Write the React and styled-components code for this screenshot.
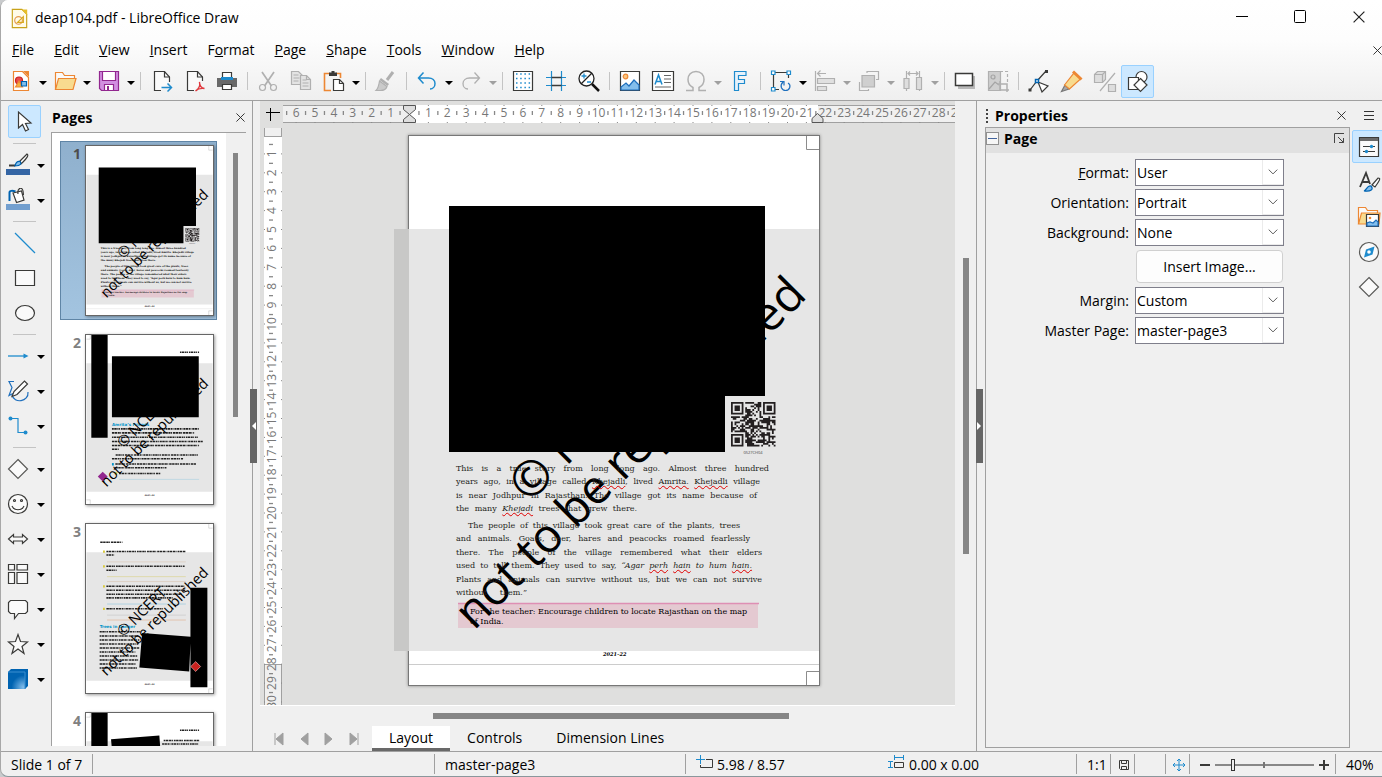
import styled, { createGlobalStyle } from "styled-components";

const DARK = "#3a3a38";
const BLUE = "#1e8bcd";
const GREY = "#b0b0b0";
const LINE = "#a0a0a0";

const GlobalStyle = createGlobalStyle`
  * {
    box-sizing: border-box;
  }
  body {
    margin: 0;
    background: #c9cbcd;
    font-family: "Open Sans", "Noto Sans", sans-serif;
    font-size: 14px;
    line-height: 20px;
    color: #000;
  }
  button, input, select {
    font: inherit;
    color: inherit;
    margin: 0;
  }
`;

/* ---------- window ---------- */

const Window = styled.div`
  height: 100vh;
  display: flex;
  flex-direction: column;
  overflow: hidden;
  background: #f0f0f0;
  border-left: 1px solid #a8a8a8;
  border-bottom: 1px solid #8a979c;
  border-radius: 8px 0 0 8px;
`;

const Top = styled.header`
  background: linear-gradient(#fff, #fdfdfd 40%, #efefef);
  border-bottom: 1px solid ${LINE};
`;

const TitleBar = styled.div`
  display: flex;
  align-items: center;
  height: 36px;
  padding-left: 7px;
`;

const Title = styled.h1`
  flex: 1;
  margin: 0 0 0 4px;
  font-size: 14px;
  font-weight: 400;
`;

const WindowButton = styled.button`
  width: 58px;
  height: 34px;
  padding: 0;
  border: 0;
  background: none;

  &:last-child {
    width: 60px;
    margin-right: -7px;
  }
`;

const MenuBar = styled.nav`
  display: flex;
  align-items: center;
  gap: 20px;
  height: 28px;
  padding-left: 11px;
`;

const MenuItem = styled.button`
  padding: 0;
  border: 0;
  background: none;
`;

const EndButton = styled(MenuItem)`
  margin-left: auto;
  line-height: 0;
`;

const Toolbar = styled.div`
  display: flex;
  align-items: center;
  height: 36px;
  padding: 0 0 2px 3px;
`;

const ToolButton = styled.button`
  flex: none;
  display: grid;
  place-items: center;
  width: 33px;
  height: ${(p) => p.$height || 33}px;
  padding: 0;
  border: 1px solid ${(p) => (p.$active ? "#99d1ff" : "transparent")};
  border-radius: 2px;
  background: ${(p) => (p.$active ? "#cce8ff" : "none")};
`;

const ArrowButton = styled.button`
  display: grid;
  place-items: center;
  width: 11px;
  height: 33px;
  padding: 3px 0 0;
  border: 0;
  background: none;

  &::after {
    content: "";
    border: 4px solid transparent;
    border-top-color: ${(p) => (p.disabled ? "#a0a0a0" : "#000")};
    border-bottom: 0;
  }
`;

const Separator = styled.span`
  width: 1px;
  height: 18px;
  margin: 0 3px 0 4px;
  background: #c4c4c4;
`;

/* ---------- icons ---------- */

const icons = {
  app: (
    <>
      <path d="M4.500 2.500h10l5 5v14h-15z" fill="#fffbe8" stroke="#c8a21a" />
      <path d="M14 2.500h6v6z" fill="#e6be2a" />
      <circle cx="11" cy="14" r="4" stroke="#e39a52" />
      <path d="M10 16l6-6v6z" stroke="#d9a91c" />
    </>
  ),
  newDoc: (
    <>
      <path d="M4.500 2.500h9l6 6v13h-15z" fill="#fff" stroke="#ed8733" />
      <path d="M14 2h6v6z" fill="#ed8733" />
      <circle cx="10" cy="11.500" r="3.500" fill="#e8484a" stroke="#c9211e" />
      <path d="M6.500 18l3.500-6 3.500 6z" fill="#f4b13e" stroke="#ed8733" />
      <path d="M12.500 12.500h5v4.500h-5z" fill="#83beec" stroke="#0063b1" />
    </>
  ),
  open: (
    <>
      <path d="M2.500 20.500V3.500h7l2 3h10v3" stroke="#ed8733" fill="#fafafa" />
      <path d="M2.500 20.500l3-11H23l-3 11z" fill="#f8db8f" stroke="#ed8733" />
    </>
  ),
  save: (
    <>
      <path d="M2.500 2.500h19v19h-17l-2-2z" fill="#d18fe0" stroke="#92278f" />
      <path d="M5.500 2.500h13v9h-13z" fill="#fff" stroke="#92278f" />
      <path d="M7.500 15.500h9v6h-9z" fill="#fff" stroke="#92278f" />
      <path d="M10 17h2v4h-2z" fill="#92278f" />
    </>
  ),
  exportDoc: (
    <>
      <path d="M20.500 13V8l-5-5.500h-10v19H12" stroke={DARK} fill="#fafafa" />
      <path d="M15.500 2.500V8h5" stroke={DARK} />
      <path d="M12.500 18.500h10m-4-4l4 4-4 4" stroke={BLUE} strokeWidth="1.500" />
    </>
  ),
  pdf: (
    <>
      <path d="M20.500 12V8l-5-5.500h-10v19H12" stroke={DARK} fill="#fafafa" />
      <path d="M15.500 2.500V8h5" stroke={DARK} />
      <path d="M17.500 13c1 4-1 7-4 9 2-2 5-3 9-2.500-3-.5-5-3-5-6.500z" stroke="#e0393e" strokeWidth="1.400" />
    </>
  ),
  print: (
    <>
      <path d="M7.500 9V3.500h9V9" stroke={DARK} fill="#fff" />
      <path d="M2 9h20v9H2z" fill="#696969" />
      <path d="M6 8h12v3H6z" fill="#1e8bcd" />
      <path d="M7.500 15.500h9v5h-9z" fill="#fff" stroke={DARK} />
    </>
  ),
  cut: (
    <>
      <path d="M6 3l9.500 14M18 3L8.500 17" stroke={GREY} strokeWidth="1.700" />
      <circle cx="6.500" cy="18.500" r="3" stroke={GREY} />
      <circle cx="17.500" cy="18.500" r="3" stroke={GREY} />
    </>
  ),
  copy: (
    <>
      <path d="M2.500 2.500h7l4 4v9h-11z" stroke={GREY} fill="#e3e3e3" />
      <path d="M4.500 6h5m-5 3h6m-6 3h5" stroke={GREY} />
      <path d="M11.500 6.500h6l4 4v10h-10z" stroke={GREY} fill="#e3e3e3" />
      <path d="M17.500 6.500v4h4M13.500 11h4m-4 3h6m-6 3h6" stroke={GREY} />
    </>
  ),
  paste: (
    <>
      <path d="M8 4.500H2.500v17H9M14 4.500h4.500V9" stroke="#ed8733" strokeWidth="1.600" />
      <path d="M7 3.500h2.500V2h3v1.500H15V7H7z" fill={DARK} />
      <path d="M11.500 10.500h6l4 4v7h-10z" fill="#fff" stroke={DARK} />
      <path d="M17.500 10.500v4h4" stroke={DARK} />
    </>
  ),
  brush: (
    <>
      <path d="M19 3l-6 8" stroke={GREY} strokeWidth="3" />
      <path d="M7 9l8 6-1.500 2-8-6z" fill={GREY} />
      <path d="M5.500 12l7.500 5.500c-1 3-4 4-6.500 4H2c2-2 3-6 3.500-9.500z" fill="#cacaca" stroke={GREY} />
    </>
  ),
  undo: (
    <path d="M8.500 3.500l-5 5.500 5 5.500M4 9h9.500c4 0 6.500 2.500 6.500 5.500s-2 5.500-5 5.500" stroke={BLUE} strokeWidth="1.500" />
  ),
  redo: (
    <path d="M15.500 3.500l5 5.500-5 5.500M20 9h-9.500C6.500 9 4 11.500 4 14.500S6 20 9 20" stroke={GREY} strokeWidth="1.300" />
  ),
  grid: (
    <>
      <path d="M2.500 2.500h19v19h-19z" stroke={DARK} fill="#fff" />
      <path
        d="M5 5h15M5 9.500h15M5 14h15M5 18.500h15"
        stroke={BLUE}
        strokeWidth="1.500"
        strokeDasharray="1.500 2.700"
      />
    </>
  ),
  guides: (
    <>
      <path d="M2 8.500h20M2 16.500h20" stroke={BLUE} strokeWidth="1.200" />
      <path d="M7.500 2v20M17.500 2v20" stroke={BLUE} strokeWidth="1.200" />
      <path d="M7.500 8.500h10m-10 8h10" stroke={DARK} strokeWidth="1.400" />
    </>
  ),
  zoom: (
    <>
      <circle cx="9.500" cy="9.500" r="7.500" stroke="#222" fill="#fff" strokeWidth="1.300" />
      <path d="M15 15l7 7" stroke="#111" strokeWidth="2.500" />
      <path d="M4 15L15 4" stroke="#222" />
      <path d="M7 4.500v5M4.500 7h5M10 13h4" stroke={BLUE} strokeWidth="1.300" />
    </>
  ),
  image: (
    <>
      <path d="M2.500 2.500h19v19h-19z" stroke={DARK} fill="#fff" />
      <circle cx="7.500" cy="7.500" r="2.300" fill="#fcc67e" stroke="#ed8733" />
      <path d="M3 21v-3l5-4 3 3 5-6 5 5v5z" fill="#83beec" stroke="#1e6fbd" />
    </>
  ),
  textBox: (
    <>
      <path d="M1.500 2.500h21v19h-21z" stroke={DARK} fill="#fff" />
      <path d="M4 15.500L7.500 6 11 15.500M5 12.500h5" stroke={BLUE} strokeWidth="1.500" />
      <path d="M13 6.500h7M13 10h7M13 13.500h7M4 18h16" stroke="#666" />
    </>
  ),
  omega: (
    <path
      d="M2 21.500h7v-3c-3-1.500-5-4-5-8 0-4.500 3-8 8-8s8 3.500 8 8c0 4-2 6.500-5 8v3h7"
      stroke={GREY}
      strokeWidth="1.500"
    />
  ),
  fontwork: (
    <path d="M6.500 2.500h11.500v4h-7.500v4h6v4h-6v7h-4z" fill="#e7f2fb" stroke={BLUE} />
  ),
  transform: (
    <>
      <path d="M4.500 12V3.500h15V9M4.500 10v10.500H10" stroke={DARK} />
      <path d="M14 13c-4 4-1 8.500 2.500 8.500 4.500 0 6-5.500 2.500-7.500M15 16.500v-4h-4" stroke="#1e6fbd" />
      <path d="M2.500 2h3.500v3.500H2.500zM18 2h3.500v3.500H18zM2.500 18.500h3.500v3.500H2.500z" fill="#fff" stroke={BLUE} />
    </>
  ),
  align: (
    <>
      <path d="M2.500 2v20M4 4.500h9M7.500 1.500l-3 3 3 3" stroke={GREY} />
      <path d="M4.500 9.500h17v5h-17zM4.500 17.500h9v4h-9z" stroke={GREY} fill="#e0e0e0" />
    </>
  ),
  arrange: (
    <>
      <path d="M10 4V2.500h11.500v8H19M2.500 13v8.500h9V20" stroke={GREY} />
      <path d="M5 6.500h12.500V18H5z" fill="#cfcfcf" stroke={GREY} />
    </>
  ),
  distribute: (
    <>
      <path d="M5.500 2v20M18.500 2v20M7 4.500h10M9 2.500l-2 2 2 2m6-4l2 2-2 2" stroke={GREY} />
      <path d="M3 9.500h5v10H3zM15.500 8.500h5v12h-5z" fill="#dedede" stroke={GREY} />
    </>
  ),
  shadow: (
    <>
      <path d="M5 7h17v13H5z" fill="#b8b8b8" />
      <path d="M2.500 4.500h17v12h-17z" fill="#fff" stroke={DARK} strokeWidth="1.500" />
    </>
  ),
  crop: (
    <>
      <path d="M2.500 2.500h12v19h-12z" fill="#cfcfcf" stroke={GREY} />
      <circle cx="7" cy="8" r="2" stroke="#a4a4a4" />
      <path d="M3 20l6-7 4 3" stroke="#a4a4a4" />
      <path d="M14 2.500h7.500V14" stroke={GREY} strokeDasharray="3 2" />
      <path d="M14 12v9h9M12 15h9v8" stroke={GREY} strokeWidth="1.500" />
    </>
  ),
  points: (
    <>
      <path d="M3 21l7-9 9-10" stroke={DARK} />
      <path d="M11 13l10 4-6 6z" fill="#fff" stroke={DARK} />
      <path d="M1.500 19.500h3v3h-3zM18 1h3v3h-3z" fill={DARK} />
      <path d="M8.500 10.500h3v3h-3z" fill="#fff" stroke="#0063b1" strokeWidth="1.500" />
    </>
  ),
  glue: (
    <>
      <path d="M5 16l-3.500 6.500L9 20z" fill="#a8a8a8" stroke="#777" />
      <path d="M4.500 16L14 4l6.500 6L9.500 20z" fill="#f8db8f" stroke="#ed8733" />
      <path d="M13 2.500l8.500 8" stroke="#ed8733" strokeWidth="3" />
    </>
  ),
  extrude: (
    <>
      <path d="M1.500 5.500l3-3h8v8l-3 3h-8z" fill="#dedede" stroke={GREY} />
      <path d="M1.500 5.500h8v8m0-8l3-3M22 4L7 22" stroke={GREY} />
      <path d="M15.500 15.500h7v7h-7z" fill="#dedede" stroke={GREY} />
    </>
  ),
  shapes: (
    <>
      <circle cx="15.500" cy="8" r="5.500" fill="#fff" stroke={DARK} />
      <path d="M2.500 8.500h10v12h-10z" fill="#fff" stroke={DARK} />
      <path d="M14.500 9.500l6.500 6.500-6.500 6.500L8 16z" fill="#fff" stroke={DARK} />
    </>
  ),
  pointer: (
    <path d="M5.500 2v16l4-3.500 3 6.500 3-1.500-3-6 5.500-.5z" fill="#fff" stroke={DARK} />
  ),
  lineColor: (
    <>
      <path d="M3 12.500h6" stroke={DARK} strokeWidth="1.800" />
      <path d="M14 8l7-7c2 1 0 4-4 8l-2 2z" fill="#fff" stroke={DARK} />
      <path d="M9 13c1-4 3-5 5-4.500 2 2 1 4-5 4.500z" fill="#83beec" stroke="#0063b1" />
      <path d="M0 16h24v6H0z" fill="#3465a4" />
    </>
  ),
  fillColor: (
    <>
      <path d="M3.500 13V4.500c0-2 3-2 6-1" stroke="#0063b1" strokeWidth="2" />
      <path d="M7 5l8.500-2L18 12l-7.500 2.500z" fill="#fff" stroke={DARK} />
      <path d="M12 6c-1-6 4-8 5-3l.500 4" stroke={DARK} />
      <path d="M0 16h24v6H0z" fill="#729fcf" />
    </>
  ),
  line: <path d="M2 2l20 20" stroke={BLUE} strokeWidth="1.200" />,
  rect: <path d="M2.500 4.500h19v15h-19z" fill="#fafafa" stroke={DARK} />,
  ellipse: <ellipse cx="12" cy="12" rx="9.500" ry="7.500" fill="#fafafa" stroke={DARK} />,
  arrow: (
    <>
      <path d="M2 12h17" stroke={BLUE} strokeWidth="1.300" />
      <path d="M17.500 9.500l5 2.500-5 2.500z" fill={BLUE} />
    </>
  ),
  curve: (
    <>
      <path d="M8 2.500H3l3 6-3 8 4-2M6 16c2 9 17 7 16-3" stroke="#1e6fbd" />
      <path d="M6 17.500l2-5L18.500 2l3 3L11 15.500z" fill="#fff" stroke={DARK} />
    </>
  ),
  connector: (
    <>
      <path d="M5 4.500h7v14h7" stroke={BLUE} />
      <circle cx="4.500" cy="4.500" r="2" fill={BLUE} />
      <circle cx="19.500" cy="18.500" r="2" fill={BLUE} />
    </>
  ),
  diamond: <path d="M12 2.500l9.500 9.500-9.500 9.500L2.500 12z" fill="#fafafa" stroke="#5a5a58" />,
  smiley: (
    <>
      <circle cx="12" cy="12" r="9.500" fill="#fafafa" stroke={DARK} />
      <path d="M6 14c2 5 10 5 12 0" stroke={DARK} />
      <circle cx="8.500" cy="8.500" r="1" stroke={DARK} />
      <circle cx="15.500" cy="8.500" r="1" stroke={DARK} />
    </>
  ),
  blockArrow: (
    <path d="M2.500 12l5-4.500V10h9V7.500l5 4.500-5 4.500V14h-9v2.500z" fill="#fafafa" stroke={DARK} />
  ),
  flow: (
    <path
      d="M2.500 2.500h6v5.500h-6zM11 2.500h10.500v5.500H11zM2.500 10.500h6v11h-6zM11 10.500h10.500v11H11z"
      fill="#fafafa"
      stroke={DARK}
    />
  ),
  callout: (
    <path d="M4.500 3.500h15l2 2v9l-2 2h-7l-4 5v-5h-4l-2-2v-9z" fill="#fafafa" stroke={DARK} />
  ),
  star: (
    <path d="M12 2.500l2.500 7 7 .500-5.500 4.500 2 7-6-4.500-6 4.500 2-7L2.500 10l7-.5z" fill="#fafafa" stroke={DARK} />
  ),
  cube: (
    <>
      <defs>
        <radialGradient id="cube-shine" cx="0.900" cy="0.900" r="0.700">
          <stop offset="0" stopColor="#83beec" />
          <stop offset="1" stopColor="#0063b1" />
        </radialGradient>
      </defs>
      <path d="M2 5l3-3h17v17l-3 3H2z" fill="#0063b1" />
      <path d="M2 5h17v17H2z" fill="url(#cube-shine)" />
      <path d="M2 5h17v17" stroke="#3b8fd0" strokeWidth="1" />
    </>
  ),
  properties: (
    <>
      <path d="M2.500 2.500h19v19h-19z" fill="#fafafa" stroke={DARK} />
      <path d="M3 3h18v3H3z" fill="#696969" />
      <path d="M6 11.500h12M6 16.500h12" stroke={DARK} />
      <circle cx="14.500" cy="11.500" r="1.700" fill={BLUE} />
      <circle cx="9.500" cy="16.500" r="1.700" fill={BLUE} />
    </>
  ),
  styles: (
    <>
      <path d="M3 17L9 3l4 11M5 12h7" stroke={DARK} strokeWidth="1.800" />
      <path d="M15 15l6-7c3 0 2 2-3 9z" fill="#fff" stroke={DARK} />
      <path d="M7 21c3-1 3-6 7-5 3 3 0 6-7 5z" fill="#83beec" stroke="#0063b1" />
    </>
  ),
  gallery: (
    <>
      <path d="M1.500 19V2.500h7l2 3h10v3" fill="#fafafa" stroke="#ed8733" />
      <path d="M1.500 19l3-11H23l-1 11z" fill="#f8db8f" stroke="#ed8733" />
      <path d="M9.500 9.500h12v12h-12z" fill="#fff" stroke={DARK} />
      <circle cx="13" cy="13" r="1.300" fill="#ed8733" />
      <path d="M10 21v-3l3-1 3 1 3-3 2 2v4z" fill="#83beec" stroke="#1e6fbd" />
    </>
  ),
  navigator: (
    <>
      <circle cx="12" cy="12" r="9.500" fill="#fafafa" stroke="#5a5a58" />
      <path d="M17.500 6.500l-2 8-8.500 3 2-8z" fill={BLUE} />
      <circle cx="12" cy="12" r="1.800" fill="#fff" />
    </>
  ),
};

const Icon = ({ name, size = 24 }) => (
  <svg width={size} height={size} viewBox="0 0 24 24" fill="none" strokeWidth="1.200" aria-hidden="true">
    {icons[name]}
  </svg>
);

const Cross = ({ size = 9 }) => (
  <svg width={size} height={size} viewBox="0 0 10 10" aria-hidden="true">
    <path d="M.5.5l9 9m0-9l-9 9" stroke="#222" strokeWidth="1" fill="none" />
  </svg>
);

/* ---------- toolbars ---------- */

const standardTools = [
  { name: "newDoc", label: "New", menu: true },
  { name: "open", label: "Open", menu: true },
  { name: "save", label: "Save", menu: true },
  null,
  { name: "exportDoc", label: "Export" },
  { name: "pdf", label: "Export as PDF" },
  { name: "print", label: "Print" },
  null,
  { name: "cut", label: "Cut", disabled: true },
  { name: "copy", label: "Copy", disabled: true },
  { name: "paste", label: "Paste", menu: true },
  null,
  { name: "brush", label: "Clone", disabled: true },
  null,
  { name: "undo", label: "Undo", menu: true },
  { name: "redo", label: "Redo", menu: true, disabled: true },
  null,
  { name: "grid", label: "Display Grid" },
  { name: "guides", label: "Helplines" },
  { name: "zoom", label: "Zoom & Pan" },
  null,
  { name: "image", label: "Image" },
  { name: "textBox", label: "Text Box" },
  { name: "omega", label: "Special Character", menu: true, disabled: true },
  { name: "fontwork", label: "Fontwork" },
  null,
  { name: "transform", label: "Transformations", menu: true },
  { name: "align", label: "Align", menu: true, disabled: true },
  { name: "arrange", label: "Arrange", menu: true, disabled: true },
  { name: "distribute", label: "Distribute", menu: true, disabled: true },
  null,
  { name: "shadow", label: "Shadow" },
  { name: "crop", label: "Crop", disabled: true },
  null,
  { name: "points", label: "Points" },
  { name: "glue", label: "Gluepoints" },
  { name: "extrude", label: "Extrusion", disabled: true },
  { name: "shapes", label: "Draw Functions", active: true },
];

const drawTools = [
  { name: "pointer", label: "Select", active: true },
  null,
  { name: "lineColor", label: "Line Color", menu: true },
  { name: "fillColor", label: "Fill Color", menu: true },
  null,
  { name: "line", label: "Line" },
  { name: "rect", label: "Rectangle" },
  { name: "ellipse", label: "Ellipse" },
  null,
  { name: "arrow", label: "Lines and Arrows", menu: true },
  { name: "curve", label: "Curves", menu: true },
  { name: "connector", label: "Connectors", menu: true },
  null,
  { name: "diamond", label: "Basic Shapes", menu: true },
  { name: "smiley", label: "Symbol Shapes", menu: true },
  { name: "blockArrow", label: "Block Arrows", menu: true },
  { name: "flow", label: "Flowchart", menu: true },
  { name: "callout", label: "Callouts", menu: true },
  { name: "star", label: "Stars", menu: true },
  { name: "cube", label: "3D Objects", menu: true },
];

const DrawBar = styled.div`
  width: 50px;
  padding-top: 3px;
  flex: none;
`;

const DrawRow = styled.div`
  display: flex;
  align-items: center;
  justify-content: ${(p) => (p.$menu ? "space-between" : "center")};
  height: 35px;
  padding: ${(p) => (p.$menu ? "0 5px 0 0" : "0 3px 0 0")};
`;

const DrawRule = styled.hr`
  width: 23px;
  margin: 4px auto 3px 12px;
  border: 0;
  border-top: 1px solid #c4c4c4;
`;

/* ---------- page panel ---------- */

const Main = styled.main`
  flex: 1;
  min-height: 0;
  display: flex;
`;

const PagesPanel = styled.section`
  flex: none;
  width: 199px;
  display: flex;
  flex-direction: column;
  padding-bottom: 5px;
`;

const PanelHead = styled.div`
  display: flex;
  align-items: center;
  justify-content: space-between;
  flex: none;
  height: 31px;
  padding: 2px 5px 0 1px;
`;

const PanelTitle = styled.h2`
  margin: 0;
  font-size: 14px;
  font-weight: 700;
`;

const PagesScroller = styled.div`
  flex: 1;
  min-height: 0;
  display: flex;
  width: 195px;
  border-top: 1px solid ${LINE};
  border-left: 1px solid ${LINE};
`;

const PageList = styled.ol`
  flex: 1;
  display: flex;
  flex-direction: column;
  gap: 10px;
  margin: 0;
  padding: 8px 0 0 8px;
  overflow: hidden;
  background: #fff;
  list-style: none;
`;

const PageItem = styled.li`
  flex: none;
  display: flex;
  width: 157px;
  height: 179px;
  padding: 4px 3px;
  border: 1px solid ${(p) => (p.$selected ? "#5f85a6" : "transparent")};
  background: ${(p) => (p.$selected ? "linear-gradient(#8fb0cd, #a3c4e0)" : "none")};
`;

const PageNumber = styled.span`
  width: 22px;
  padding-right: 5px;
  text-align: right;
  font-weight: 700;
  line-height: 16px;
  color: ${(p) => (p.$selected ? "#4c4c4c" : "#808080")};
`;

const Thumb = styled.svg`
  display: block;
  width: 127px;
  height: 169px;
  background: #fff;
  outline: 1px solid #666;
  box-shadow: 1px 1px 3px 1px rgba(0, 0, 0, 0.4);
`;

const Track = styled.div`
  flex: none;
  width: 20px;
  padding: 20px 8px 0 7px;
`;

const TrackThumb = styled.div`
  height: ${(p) => p.$length}px;
  background: #868686;
`;

const Splitter = styled.div`
  flex: none;
  width: 10px;
  display: flex;
  flex-direction: column;
  justify-content: center;
  align-items: ${(p) => (p.$side === "left" ? "flex-start" : "center")};
  background: linear-gradient(90deg, transparent 2px, ${LINE} 2px 3px, transparent 3px);
`;

const SplitterGrip = styled.button`
  display: grid;
  place-items: center;
  width: 7px;
  height: 74px;
  padding: 0;
  border: 0;
  background: #666;

  &::after {
    content: "";
    border: 4px solid transparent;
    border-${(p) => (p.$side === "left" ? "right" : "left")}-color: #fff;
    border-${(p) => p.$side}: 0;
  }
`;

const Watermark = () => (
  <g fontFamily="Open Sans, sans-serif" fill="#000">
    <text fontSize="48" transform="translate(120 368) rotate(-45)">
      © NCERT
    </text>
    <text fontSize="47" transform="translate(65 495) rotate(-45)">
      not to be republished
    </text>
  </g>
);

const QR_SIZE = 25;

// true inside a finder pattern, false in its quiet zone, null for data modules
const finderModule = (x, y) => {
  const fx = x > 16 ? 24 - x : x;
  const fy = y > 16 ? 24 - y : y;
  if (fx > 7 || fy > 7 || (x > 16 && y > 16)) return null;
  if (fx > 6 || fy > 6) return false;
  return Math.max(Math.abs(fx - 3), Math.abs(fy - 3)) !== 2;
};

const qrPath = () => {
  let d = "";
  let seed = 7;
  for (let y = 0; y < QR_SIZE; y++) {
    for (let x = 0; x < QR_SIZE; x++) {
      seed = (seed * 16807) % 2147483647;
      const finder = finderModule(x, y);
      if (finder === null ? seed / 2147483647 > 0.45 : finder) d += `M${x} ${y}h1v1h-1z`;
    }
  }
  return d;
};

const QrCode = () => (
  <g>
    <path d="M316 260h56v60h-56z" fill="#e6e6e6" />
    <path d={qrPath()} fill="#231f20" transform="translate(322 266) scale(1.78)" />
    <text x="344" y="318" fontSize="4" textAnchor="middle" fill="#444" fontFamily="Open Sans, sans-serif">
      0527CH04
    </text>
  </g>
);

const CornerMarks = ({ side = "right" }) => (
  <path
    d={side === "right" ? "M397.500 0v13.500H410M410 535.500h-12.500V549" : "M12.500 0v13.500H0M0 535.500h12.500V549"}
    fill="none"
    stroke="#8c8c8c"
  />
);

const story = [
  [
    { end: 313, text: ["This is a true story from long long ago. Almost three hundred"] },
    {
      end: 304,
      text: ["years ago, in a village called ", { typo: "Khejadli" }, ", lived ", { typo: "Amrita." }, " ", { typo: "Khejadli" }, " village"],
    },
    { end: 301, text: ["is near Jodhpur in Rajasthan. The village got its name because of"] },
    { end: 181, text: ["the many ", { typo: "Khejadi", italic: true }, " trees that grew there."] },
  ],
  [
    { start: 12, end: 284, text: ["The people of this village took great care of the plants, trees"] },
    { end: 294, text: ["and animals. Goats, deer, hares and peacocks roamed fearlessly"] },
    { end: 306, text: ["there. The people of the village remembered what their elders"] },
    {
      end: 296,
      text: [
        "used to tell them. They used to say, ",
        { plain: "“Agar ", italic: true },
        { typo: "perh", italic: true },
        " ",
        { typo: "hain", italic: true },
        { plain: " to hum ", italic: true },
        { typo: "hain.", italic: true },
      ],
    },
    { end: 306, text: ["Plants and animals can survive without us, but we can not survive"] },
    { end: 71, text: ["without them.”"] },
  ],
];

const teacherNote = ["For the teacher: Encourage children to locate Rajasthan on the map", "of India."];

const flatten = (parts) => parts.map((p) => (typeof p === "string" ? p : p.typo || p.plain)).join("");

const FirstPageArt = () => (
  <>
    <path d="M0 93h410v422H0z" fill="#e6e6e6" />
    <path d="M49 468h300v24H49z" fill="#e4c9d1" />
    <path d="M49 467.500h301" stroke="#de8fb4" strokeWidth="1.500" />
    <path d="M0 528.500h410" stroke="#ccc" />
    <Watermark />
    <path d="M40 70h316v190h-40v56H40z" fill="#000" />
    <QrCode />
    <CornerMarks />
  </>
);

const TinyLines = ({ rows }) => (
  <>
    {rows.map(([x1, x2, y]) => (
      <path
        key={y}
        d={`M${x1} ${y}H${x2}`}
        stroke="#222"
        strokeWidth="5"
        strokeDasharray={`${5 + (y % 4)} 1.500 8 2 ${4 + (y % 5)} 1.500 3 3`}
      />
    ))}
  </>
);

const Heading = ({ x, y, children }) => (
  <text x={x} y={y} fontSize="13" fontWeight="700" fill="#0092c8" fontFamily="DejaVu Sans, sans-serif">
    {children}
  </text>
);

const FooterYear = () => (
  <text x="205" y="522" fontSize="7" fontWeight="700" textAnchor="middle" fontFamily="DejaVu Serif, serif">
    2021–22
  </text>
);

const thumbs = [
  <>
    <FirstPageArt />
    <g fontSize="8" fontWeight="700" fontFamily="DejaVu Serif, serif" fill="#111">
      {story.map((lines, p) =>
        lines.map((line, i) => (
          <text key={`${p}-${i}`} x={47 + (line.start || 0)} y={335 + p * 57 + i * 13}>
            {flatten(line.text)}
          </text>
        ))
      )}
      {teacherNote.map((line, i) => (
        <text key={line} x="61" y={478 + i * 10} fontSize="7">
          {line}
        </text>
      ))}
    </g>
    <FooterYear />
  </>,
  <>
    <path d="M0 92h410v417H0z" fill="#e6e6e6" />
    <path d="M53 444l16 16-16 16-16-16z" fill="#92278f" />
    <path d="M92 446h8v8h-8z" fill="#d8c93a" />
    <path d="M83 416h6v8h-6z" fill="#0092c8" />
    <Heading x={83} y={294}>Amrita’s Friends</Heading>
    <TinyLines
      rows={[
        [304, 366, 56],
        [83, 365, 305],
        [83, 350, 318],
        [83, 362, 332],
        [83, 378, 346],
        [83, 366, 359],
        [83, 105, 371],
        [95, 362, 390],
        [83, 315, 402],
        [94, 356, 419],
        [94, 260, 431],
        [106, 240, 450],
      ]}
    />
    <path d="M106 469h260" stroke="#a8cfe0" strokeWidth="2" />
    <Watermark />
    <path d="M16 0h53v334H16zM83 69h282v198H83z" fill="#000" />
    <FooterYear />
    <CornerMarks side="left" />
  </>,
  <>
    <path d="M0 92h410v417H0z" fill="#e6e6e6" />
    <path d="M54 86h6v7h-6zM54 134h6v7h-6zM54 199h6v7h-6zM54 272h6v7h-6z" fill="#d8c93a" />
    <TinyLines
      rows={[
        [45, 117, 59],
        [65, 323, 89],
        [65, 90, 101],
        [65, 320, 137],
        [65, 98, 150],
        [65, 320, 202],
        [65, 322, 215],
        [65, 312, 228],
        [65, 280, 240],
        [65, 250, 275],
        [43, 175, 350],
        [43, 168, 364],
        [43, 172, 377],
        [43, 168, 390],
        [43, 172, 403],
        [43, 160, 416],
        [43, 165, 429],
        [43, 168, 442],
        [43, 160, 455],
        [43, 166, 468],
      ]}
    />
    <g strokeWidth="2">
      <path d="M67 123h256M67 187h256" stroke="#d8c4b0" />
      <path d="M67 171h256" stroke="#d9d28a" />
      <path d="M67 260h256" stroke="#8fc6de" />
      <path d="M67 296h256" stroke="#c4c4c4" />
      <path d="M67 312h256" stroke="#e2b08c" />
    </g>
    <Heading x={43} y={339}>Trees in Danger</Heading>
    <Watermark />
    <path d="M338 207h55v323h-55zM181 354l158 12-5 113-162-13z" fill="#000" />
    <path d="M355 447l16 16-16 16-16-16z" fill="#c9211e" stroke="#f4b9b9" strokeWidth="2" />
    <FooterYear />
    <CornerMarks />
  </>,
  <>
    <path d="M0 92h410v417H0z" fill="#e6e6e6" />
    <path d="M16 0h53v334H16zM80 85l157-12 8 110-155 12z" fill="#000" />
    <TinyLines
      rows={[
        [304, 366, 56],
        [251, 368, 89],
        [246, 366, 101],
      ]}
    />
    <CornerMarks side="left" />
  </>,
];

/* ---------- rulers ---------- */

const UNIT = 18.9;
const range = (from, to) => Array.from({ length: to - from + 1 }, (_, i) => from + i);

const HRulerBar = styled.svg`
  display: block;
  width: 100%;
  height: 18px;
  overflow: hidden;
  font-size: 12px;
  fill: #777;
`;

const VRulerBar = styled(HRulerBar)`
  width: 18px;
  height: 100%;
`;

const HorizontalRuler = () => (
  <HRulerBar>
    <rect width="100%" height="18" fill="#f0f0f0" />
    <path d="M0 .5H2000M0 17.500H2000" stroke={LINE} />
    <rect x="126" width="409" height="18" fill="#fff" />
    {range(-6, 29).map((n) => {
      const x = 126.5 + n * UNIT;
      return (
        <g key={n}>
          {n !== 0 && (
            <text x={x} y="12" textAnchor="middle">
              {Math.abs(n)}
            </text>
          )}
          <path d={`M${x} 0v1m0 16v1`} stroke="#888" />
          <path d={`M${x - UNIT / 2} 6v4`} stroke="#888" strokeWidth="1.300" />
        </g>
      );
    })}
    <g fill="#dedede" stroke="#555">
      <path d="M120.500 .5h12v4l-6 5-6-5zM120.500 17.500h12v-3l-6-5-6 5z" />
      <path d="M529 17.500h11v-4l-5.500-5-5.500 5z" />
    </g>
  </HRulerBar>
);

const VerticalRuler = () => (
  <VRulerBar>
    <rect width="18" height="100%" fill="#f0f0f0" />
    <path d="M.5 0V2000M17.500 0V2000M0 8.500h18M0 536.500h18" stroke={LINE} />
    <rect y="9" width="18" height="527" fill="#fff" />
    {range(1, 30).map((n) => {
      const y = 7 + n * UNIT;
      return (
        <g key={n}>
          <text transform={`translate(12 ${y}) rotate(-90)`} textAnchor="middle">
            {n}
          </text>
          <path d={`M0 ${y}h1m16 0h1`} stroke="#888" />
          <path d={`M5 ${y - UNIT / 2}h4`} stroke="#888" strokeWidth="1.300" />
        </g>
      );
    })}
  </VRulerBar>
);

/* ---------- document area ---------- */

const Editor = styled.section`
  flex: 1;
  min-width: 0;
  display: flex;
  flex-direction: column;
`;

const EditorTop = styled.div`
  flex: 1;
  min-height: 0;
  display: flex;
`;

const Workspace = styled.div`
  flex: 1;
  min-width: 0;
  display: grid;
  grid-template-columns: 18px minmax(0, 1fr);
  grid-template-rows: 18px minmax(0, 1fr);
  column-gap: 1px;
  row-gap: 5px;
  padding: 4px 0 0 4px;
  overflow: hidden;
  background: #dfdfde;
  border-bottom: 1px solid #fff;
`;

const RulerCorner = styled.div`
  display: grid;
  place-items: center;
`;

const Canvas = styled.div`
  min-width: 0;
  padding: 8px 0 0 126px;
  overflow: hidden;
`;

const Sheet = styled.article`
  position: relative;
  width: 410px;
  height: 549px;
  background: #fff;
  outline: 1px solid #777;
  box-shadow: 0 0 3px 1px rgba(0, 0, 0, 0.4);
`;

const SheetArt = styled.svg`
  position: absolute;
  inset: 0;
  width: 100%;
  height: 100%;
  overflow: visible;
`;

const StoryText = styled.div`
  position: absolute;
  top: 326px;
  left: 47px;
  width: 313px;
  display: flex;
  flex-direction: column;
  gap: 4px;
  font: 8px/13px "DejaVu Serif", serif;
  color: #231f20;
`;

const Paragraph = styled.p`
  display: flex;
  flex-direction: column;
  justify-content: space-between;
  height: ${(p) => p.$height}px;
  margin: 0;
`;

const TextLine = styled.span`
  display: block;
  width: ${(p) => p.$width}px;
  margin-left: ${(p) => p.$indent}px;
  white-space: nowrap;
  text-align: justify;
  text-align-last: justify;
`;

const Run = styled.span`
  font-style: ${(p) => (p.$italic ? "italic" : "normal")};
  text-decoration: ${(p) => (p.$typo ? "underline wavy #e00000 1px" : "none")};
  text-underline-offset: 1px;
  text-decoration-skip-ink: none;
`;

const TeacherNote = styled.p`
  position: absolute;
  top: 471px;
  left: 61px;
  margin: 0;
  font: 8px/10px "DejaVu Serif", serif;
  white-space: pre-line;
`;

const Year = styled.span`
  position: absolute;
  top: 513px;
  left: 194px;
  font: italic 700 5px/10px "DejaVu Serif", serif;
`;

const VTrack = styled.div`
  flex: none;
  width: 19px;
  padding: 157px 5px 0 8px;
`;

const HTrack = styled.div`
  flex: none;
  height: 20px;
  padding: 7px 185px 0 173px;
`;

const HTrackThumb = styled.div`
  height: 6px;
  background: #868686;
`;

const TabBar = styled.div`
  flex: none;
  display: flex;
  align-items: stretch;
  height: 25px;
`;

const PageSteps = styled.div`
  display: flex;
  width: 112px;
  padding: 1px 0 0 6px;
`;

const PageStep = styled.button`
  display: grid;
  place-items: center;
  width: 25px;
  padding: 0;
  border: 0;
  background: none;
`;

const LayerTab = styled.button`
  padding: 2px 17px 0;
  border: 0;
  border-bottom: 3px solid ${(p) => (p.$active ? "#696969" : "transparent")};
  background: ${(p) => (p.$active ? "#fff" : "none")};
`;

const stepPaths = ["M4 2v12M12 2v12L5 8z", "M12 2v12L5 8z", "M4 2v12l7-6z", "M12 2v12M4 2v12l7-6z"];
const stepLabels = ["First page", "Previous page", "Next page", "Last page"];

/* ---------- sidebar ---------- */

const Sidebar = styled.aside`
  flex: none;
  width: 398px;
  display: flex;
  padding-left: 1px;
`;

const Deck = styled.div`
  flex: none;
  width: 365px;
  display: flex;
  flex-direction: column;
  padding-bottom: 3px;
`;

const DeckHead = styled.div`
  display: flex;
  align-items: center;
  flex: none;
  height: 26px;
  padding: 3px 4px 0 1px;
`;

const DragDots = styled.span`
  width: 2px;
  height: 14px;
  margin-right: 7px;
  background: repeating-linear-gradient(#444 0 2px, transparent 2px 4px);
`;

const DeckBody = styled.div`
  flex: 1;
  border: 1px solid ${LINE};
`;

const SectionHead = styled.div`
  display: flex;
  align-items: center;
  gap: 5px;
  height: 25px;
  padding: 0 4px 4px 0;
  background: #e1e1e1;
`;

const Collapse = styled.button`
  width: 13px;
  height: 13px;
  padding: 0;
  border: 1px solid #919191;
  background: linear-gradient(#42639c, #42639c) center / 9px 1px no-repeat, #f6f6f6;
`;

const Fields = styled.div`
  display: grid;
  grid-template-columns: 143px 149px;
  column-gap: 6px;
  row-gap: 3px;
  align-items: center;
  padding-top: 6px;
`;

const FieldLabel = styled.label`
  text-align: right;
`;

const SelectBox = styled.span`
  position: relative;
  display: flex;
  align-items: center;
  height: 27px;
  border: 1px solid #7f7f8b;
  background: #fff;
`;

const Select = styled.select`
  width: 100%;
  height: 25px;
  padding: 0 22px 0 1px;
  border: 0;
  background: none;
  appearance: none;
`;

const Chevron = styled.svg`
  position: absolute;
  right: 0;
  width: 21px;
  height: 25px;
  border-left: 1px solid #ebebeb;
  border-bottom: 1px solid #ebebeb;
  pointer-events: none;
`;

const InsertButton = styled.button`
  grid-column: 2;
  height: 33px;
  margin: 1px;
  border: 1px solid #d0d0d0;
  border-radius: 4px;
  background: #fdfdfd;
`;

const TabStrip = styled.div`
  flex: 1;
  min-width: 0;
  display: flex;
  flex-direction: column;
  gap: 2px;
  align-items: flex-start;
  padding-left: 2px;
`;

const fields = [
  { id: "format", label: <><u>F</u>ormat:</>, value: "User" },
  { id: "orientation", label: "Orientation:", value: "Portrait" },
  { id: "background", label: "Background:", value: "None" },
  null,
  { id: "margin", label: "Margin:", value: "Custom" },
  { id: "master", label: "Master Page:", value: "master-page3" },
];

/* ---------- status bar ---------- */

const StatusBar = styled.footer`
  flex: none;
  display: flex;
  align-items: center;
  height: 25px;
  border-top: 1px solid ${LINE};
`;

const StatusCell = styled.div`
  display: flex;
  align-items: center;
  gap: ${(p) => p.$gap || 4}px;
  flex: ${(p) => (p.$grow ? `1 1 ${p.$width}px` : `0 0 ${p.$width}px`)};
  min-width: 0;
  height: 20px;
  padding-top: 2px;
  padding-left: ${(p) => (p.$tight ? 7 : 10)}px;
  border-right: 1px solid ${(p) => (p.$open ? "transparent" : LINE)};
  white-space: nowrap;
`;

const StatusIcon = styled.svg`
  width: 17px;
  height: 20px;
  padding-bottom: 4px;
`;

const ZoomSlider = styled.input`
  flex: none;
  width: 99px;
  height: 12px;
  appearance: none;
  background: linear-gradient(#777, #777) 49% center / 2px 6px no-repeat,
    linear-gradient(#888, #888) center / 100% 2px no-repeat;

  &::-webkit-slider-thumb {
    appearance: none;
    width: 4px;
    height: 12px;
    border: 1px solid #333;
    background: #eee;
  }
`;

const Step = styled.button`
  flex: none;
  width: 10px;
  height: 10px;
  padding: 0;
  border: 0;
  background: linear-gradient(${DARK}, ${DARK}) center / 10px 2px no-repeat,
    linear-gradient(${DARK}, ${DARK}) center / ${(p) => (p.$plus ? 2 : 0)}px 10px no-repeat;
`;

const Tool = ({ tool }) => (
  <>
    <ToolButton aria-label={tool.label} disabled={tool.disabled} $active={tool.active}>
      <Icon name={tool.name} />
    </ToolButton>
    {tool.menu && <ArrowButton aria-label={`${tool.label} options`} disabled={tool.disabled} />}
  </>
);

const Line = ({ line }) => (
  <TextLine $width={line.end - (line.start || 0)} $indent={line.start || 0}>
    {line.text.map((part, i) =>
      typeof part === "string" ? (
        part
      ) : (
        <Run key={i} $italic={part.italic} $typo={Boolean(part.typo)}>
          {part.typo || part.plain}
        </Run>
      )
    )}
  </TextLine>
);

// [before, access key, after]
const menus = [
  ["", "F", "ile"],
  ["", "E", "dit"],
  ["", "V", "iew"],
  ["", "I", "nsert"],
  ["F", "o", "rmat"],
  ["", "P", "age"],
  ["", "S", "hape"],
  ["", "T", "ools"],
  ["", "W", "indow"],
  ["", "H", "elp"],
];

export default function App() {
  return (
    <>
      <GlobalStyle />
      <Window>
        <Top>
          <TitleBar>
            <Icon name="app" size={23} />
            <Title>deap104.pdf - LibreOffice Draw</Title>
            <WindowButton aria-label="Minimize">
              <svg width="12" height="12"><path d="M0 5.500h12" stroke="#000" /></svg>
            </WindowButton>
            <WindowButton aria-label="Maximize">
              <svg width="12" height="13"><rect x=".5" y=".5" width="11" height="12" rx="1" fill="none" stroke="#000" /></svg>
            </WindowButton>
            <WindowButton aria-label="Close">
              <Cross size={12} />
            </WindowButton>
          </TitleBar>
          <MenuBar>
            {menus.map(([before, key, after]) => (
              <MenuItem key={after}>
                {before}
                <u>{key}</u>
                {after}
              </MenuItem>
            ))}
            <EndButton aria-label="Close document">
              <Cross />
            </EndButton>
          </MenuBar>
          <Toolbar>
            {standardTools.map((tool, i) => (tool ? <Tool key={tool.name} tool={tool} /> : <Separator key={i} />))}
          </Toolbar>
        </Top>

        <Main>
          <DrawBar>
            {drawTools.map((tool, i) =>
              tool ? (
                <DrawRow key={tool.name} $menu={tool.menu}>
                  <Tool tool={tool} />
                </DrawRow>
              ) : (
                <DrawRule key={i} />
              )
            )}
          </DrawBar>

          <PagesPanel>
            <PanelHead>
              <PanelTitle>Pages</PanelTitle>
              <EndButton aria-label="Close pages panel">
                <Cross />
              </EndButton>
            </PanelHead>
            <PagesScroller>
              <PageList>
                {thumbs.map((art, i) => (
                  <PageItem key={i} $selected={i === 0}>
                    <PageNumber $selected={i === 0}>{i + 1}</PageNumber>
                    <Thumb viewBox="0 0 410 549">{art}</Thumb>
                  </PageItem>
                ))}
              </PageList>
              <Track>
                <TrackThumb $length={264} />
              </Track>
            </PagesScroller>
          </PagesPanel>
          <Splitter $side="left">
            <SplitterGrip $side="left" aria-label="Hide pages panel" />
          </Splitter>

          <Editor>
            <EditorTop>
              <Workspace>
                <RulerCorner>
                  <svg width="14" height="14"><path d="M0 5.500h14M4.500 1v13" stroke="#000" /></svg>
                </RulerCorner>
                <HorizontalRuler />
                <VerticalRuler />
                <Canvas>
                  <Sheet>
                    <SheetArt viewBox="0 0 410 549">
                      <path d="M-15 93H0v422h-15z" fill="#c8c8c7" />
                      <FirstPageArt />
                    </SheetArt>
                    <StoryText>
                      <Paragraph $height={53}>
                        {story[0].map((line, i) => <Line key={i} line={line} />)}
                      </Paragraph>
                      <Paragraph $height={80}>
                        {story[1].map((line, i) => <Line key={i} line={line} />)}
                      </Paragraph>
                    </StoryText>
                    <TeacherNote>{teacherNote.join("\n")}</TeacherNote>
                    <Year>2021–22</Year>
                  </Sheet>
                </Canvas>
              </Workspace>
              <VTrack>
                <TrackThumb $length={296} />
              </VTrack>
            </EditorTop>
            <HTrack>
              <HTrackThumb />
            </HTrack>
            <TabBar>
              <PageSteps>
                {stepPaths.map((d, i) => (
                  <PageStep key={d} aria-label={stepLabels[i]}>
                    <svg width="16" height="16"><path d={d} fill="#a0a0a0" stroke="#a0a0a0" /></svg>
                  </PageStep>
                ))}
              </PageSteps>
              <LayerTab $active>Layout</LayerTab>
              <LayerTab>Controls</LayerTab>
              <LayerTab>Dimension Lines</LayerTab>
            </TabBar>
          </Editor>

          <Splitter $side="right">
            <SplitterGrip $side="right" aria-label="Hide sidebar" />
          </Splitter>
          <Sidebar>
            <Deck>
              <DeckHead>
                <DragDots />
                <PanelTitle>Properties</PanelTitle>
                <EndButton aria-label="Close sidebar deck">
                  <Cross />
                </EndButton>
              </DeckHead>
              <DeckBody>
                <SectionHead>
                  <Collapse aria-label="Collapse section" />
                  <PanelTitle>Page</PanelTitle>
                  <EndButton aria-label="More options">
                    <svg width="11" height="11"><path d="M.5 10V.5H10M4 4l5.500 5.500M9.500 5v4.500H5" stroke="#444" fill="none" /></svg>
                  </EndButton>
                </SectionHead>
                <Fields>
                  {fields.map((field) =>
                    field ? (
                      [
                        <FieldLabel key={field.id} htmlFor={field.id}>
                          {field.label}
                        </FieldLabel>,
                        <SelectBox key={`${field.id}-box`}>
                          <Select id={field.id} defaultValue={field.value}>
                            <option>{field.value}</option>
                          </Select>
                          <Chevron viewBox="0 0 21 25">
                            <path d="M6 10l4.500 4.500L15 10" fill="none" stroke="#555" />
                          </Chevron>
                        </SelectBox>,
                      ]
                    ) : (
                      <InsertButton key="insert">Insert Image...</InsertButton>
                    )
                  )}
                </Fields>
              </DeckBody>
            </Deck>
            <TabStrip>
              <ToolButton aria-label="Sidebar settings" $height={27}>
                <svg width="10" height="10"><path d="M0 1.500h10M0 5.500h10M0 9.500h10" stroke="#333" /></svg>
              </ToolButton>
              {["properties", "styles", "gallery", "navigator", "diamond"].map((name, i) => (
                <ToolButton key={name} aria-label={name} $active={i === 0}>
                  <Icon name={name} />
                </ToolButton>
              ))}
            </TabStrip>
          </Sidebar>
        </Main>

        <StatusBar>
          <StatusCell $width={92}>Slide 1 of 7</StatusCell>
          <StatusCell $width={342} />
          <StatusCell $width={251}>master-page3</StatusCell>
          <StatusCell $width={192} $open>
            <StatusIcon><path d="M0 4.500h9M4.500 0v9" stroke={BLUE} /><path d="M10 4.500h6.500v8h-12V10" stroke={DARK} fill="none" /></StatusIcon>
            5.98 / 8.57
          </StatusCell>
          <StatusCell $width={198} $grow>
            <StatusIcon>
              <path d="M6 2.500h10M6.500 0v5M15.500 0v5M0 6.500h5M0 12.500h5M2.500 6v7" stroke={BLUE} />
              <path d="M6.500 7.500h9v5h-9z" stroke={DARK} fill="none" />
            </StatusIcon>
            0.00 x 0.00
          </StatusCell>
          <StatusCell $width={34}>1:1</StatusCell>
          <StatusCell $width={24} $tight>
            <svg width="12" height="12"><path d="M1.500 1.500h9v9h-8l-1-1zM3.500 1.500v3h5v-3M3.500 10.500v-3h5v3" stroke={DARK} fill="none" /></svg>
          </StatusCell>
          <StatusCell $width={31} />
          <StatusCell $width={24} $tight>
            <svg width="12" height="12"><path d="M6 0v12M0 6h12M4 2l2-2 2 2M4 10l2 2 2-2M2 4L0 6l2 2M10 4l2 2-2 2" stroke={BLUE} fill="none" /></svg>
          </StatusCell>
          <StatusCell $width={146} $gap={5}>
            <Step aria-label="Zoom out" />
            <ZoomSlider type="range" aria-label="Zoom" defaultValue="17" />
            <Step aria-label="Zoom in" $plus />
          </StatusCell>
          <StatusCell $width={46} $open>40%</StatusCell>
        </StatusBar>
      </Window>
    </>
  );
}
